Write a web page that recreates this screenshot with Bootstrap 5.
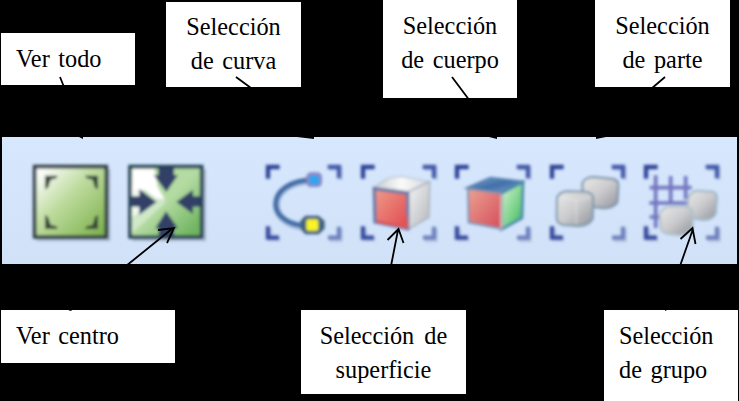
<!DOCTYPE html>
<html lang="es">
<head>
<meta charset="utf-8">
<meta name="viewport" content="width=device-width, initial-scale=1">
<title>Barra de selección</title>
<link href="https://cdn.jsdelivr.net/npm/bootstrap@5.3.0/dist/css/bootstrap.min.css" rel="stylesheet">
<style>
body{background:#000;overflow:hidden}
.board{width:739px;height:401px;font:24.3px/34px "Liberation Serif","Times New Roman",serif;color:#000;word-spacing:2.5px}
.labels-top{height:137px;padding-left:1px}
.labels-bottom{height:137px;padding:46px 0 0 1px}
.note{background:#fff;flex:none;white-space:nowrap}
.n-todo{width:134px;height:52px;margin-top:33px;padding:9px 0 0 15px}
.n-curva{width:135px;height:85px;margin:2px 0 0 31px;padding-top:8px}
.n-cuerpo{width:134px;height:98px;margin-left:82px;padding-top:9px}
.n-parte{width:135px;height:87px;margin-left:78px;padding-top:9px}
.n-centro{width:174px;height:53px;padding:9px 0 0 15px}
.n-super{width:165px;height:84px;margin-left:126px;padding-top:9px}
.n-grupo{width:134px;height:91px;margin-left:138px;padding:9px 0 0 15px}
.wide-gap{word-spacing:4px}
.tools{height:127px;margin:0 2px;padding:13px 0 0 18px;background:linear-gradient(#d7e8fe,#d0e1f8)}
.tool{width:94.5px;height:105px;flex:none;overflow:visible}
.tool-gap{margin-left:46px}
.pointers{left:0;top:0;pointer-events:none}
</style>
<script src="https://cdn.jsdelivr.net/npm/bootstrap@5.3.0/dist/js/bootstrap.bundle.min.js"></script>
</head>
<body>
<main class="board position-relative overflow-hidden">
<section class="labels-top d-flex align-items-start">
<div class="note n-todo">Ver todo</div>
<div class="note n-curva text-center">Selección<br>de curva</div>
<div class="note n-cuerpo text-center">Selección<br>de cuerpo</div>
<div class="note n-parte text-center">Selección<br>de parte</div>
</section>
<nav class="tools d-flex align-items-start" aria-label="Herramientas">
<svg class="tool" viewBox="0 0 283.5 315">
<defs>
<filter id="soft" x="-10%" y="-10%" width="120%" height="120%"><feGaussianBlur stdDeviation="4"/></filter>
<linearGradient id="green" x1="0" y1="0" x2="1" y2="1"><stop offset=".08" stop-color="#fbfdfb"/><stop offset=".45" stop-color="#bddb9d"/><stop offset="1" stop-color="#77ad45"/></linearGradient>
<linearGradient id="green2" x1="0" y1="0" x2="1" y2="1"><stop offset=".5" stop-color="#b4dba2"/><stop offset=".9" stop-color="#70b561"/></linearGradient>
<linearGradient id="red" x1="0" y1="0" x2="1" y2="1"><stop offset="0" stop-color="#ef9c8a"/><stop offset="1" stop-color="#e0494e"/></linearGradient>
<linearGradient id="red2" x1="0" y1="0" x2="1" y2="1"><stop offset="0" stop-color="#eba292"/><stop offset="1" stop-color="#d64c5a"/></linearGradient>
<linearGradient id="side" x1="0" y1="0" x2="1" y2="1"><stop offset="0" stop-color="#f6f6f6"/><stop offset="1" stop-color="#b4b6bb"/></linearGradient>
<linearGradient id="topgray" x1="0" y1="0" x2="1" y2="0"><stop offset="0" stop-color="#c8ccd0"/><stop offset=".5" stop-color="#fafafa"/><stop offset="1" stop-color="#d5d8dc"/></linearGradient>
<linearGradient id="blue" x1="0" y1="0" x2="1" y2="1"><stop offset="0" stop-color="#82a5cf"/><stop offset=".5" stop-color="#406ea8"/><stop offset="1" stop-color="#87a9d1"/></linearGradient>
<linearGradient id="leaf" x1="0" y1="0" x2="1" y2="1"><stop offset="0" stop-color="#dbf5d6"/><stop offset=".65" stop-color="#70ce83"/><stop offset="1" stop-color="#3fa574"/></linearGradient>
<linearGradient id="stone" x1="0" y1="0" x2="1" y2="1"><stop offset="0" stop-color="#eaeaea"/><stop offset=".5" stop-color="#cbcbcd"/><stop offset="1" stop-color="#8f939b"/></linearGradient>
<g id="frame" fill="none" stroke-width="13">
<g stroke="#7f8fae" stroke-opacity=".3" transform="translate(5 6)"><path d="M220 50h32v34M220 264h32v-34M41 232v30h30"/></g>
<path stroke="#2d4296" d="M39 86V51h35"/><path stroke="#4259a9" d="M218 51h34v34"/><path stroke="#35499f" d="M39 229v34h33"/><path stroke="#6d80bd" d="M219 263h33v-33"/>
</g>
</defs>
<g filter="url(#soft)">
<path d="M50 57h221v216H50z" fill="#8492a5" opacity=".55"/>
<path d="M44 50h215v211H44z" fill="url(#green)" stroke="#2f3c44" stroke-width="11"/>
<path d="M75 118V77h38l-4 8-17 4-8 24zM234 118V77h-39l5 8 18 4 7 24zM75 194v43h38l-4-8-17-4-8-24zM234 194v43h-39l5-8 18-4 7-24z" fill="#35433a"/>
</g></svg>
<svg class="tool" viewBox="0 0 283.5 315"><g filter="url(#soft)">
<path d="M52 57h221v216H52z" fill="#8492a5" opacity=".55"/>
<path d="M45 50h215v211H45z" fill="url(#green2)"/>
<path d="M153 156L50 105v145z" fill="#cfe8c8"/>
<path d="M52 57h66l10 54 22 39-28-7-32-22H52z" fill="#fff"/>
<path d="M50 112l45 20-10 45-35 25z" fill="#fff" opacity=".7"/>
<path d="M130 54h47v21h12l-35 51-38-51h14zM49 139h24v-22l52 39-52 38v-24H49zM258 139h-24v-20l-50 37 50 36v-22h24zM131 259v-24h-10l32-51 36 51h-12v24z" fill="#303f68"/>
<path d="M45 50h215v211H45z" fill="none" stroke="#264356" stroke-width="11"/>
</g></svg>
<svg class="tool tool-gap" viewBox="0 0 283.5 315"><g filter="url(#soft)"><use href="#frame"/>
<path d="M173 93C35 94 30 224 151 232" fill="none" stroke="#a5bbdb" stroke-width="20"/>
<path d="M173 90C33 92 26 220 151 227" fill="none" stroke="#416ca6" stroke-width="15"/>
<rect x="154" y="67" width="47" height="44" rx="14" fill="#8e83bd"/><rect x="162" y="75" width="31" height="30" rx="6" fill="#30a3ee"/>
<path d="M151 197h40l18 16v23l-18 17h-40l-15-17v-24z" fill="#3f6280"/><rect x="154" y="208" width="36" height="34" rx="6" fill="#faf420"/>
</g></svg>
<svg class="tool" viewBox="0 0 283.5 315"><g filter="url(#soft)"><use href="#frame"/>
<path d="M70 113l44-28 40-6 84 16-63 31z" fill="url(#topgray)" stroke="#b5c1cd" stroke-width="4"/>
<path d="M174 126l65-31-2 107-62 35z" fill="url(#side)" stroke="#abb6c3" stroke-width="5"/>
<path d="M73 116l100 13v107l-98-20z" fill="url(#red)" stroke="#6678a6" stroke-width="10"/>
<path d="M80 214l90 18v-33" fill="none" stroke="#e25255" stroke-width="7"/>
</g></svg>
<svg class="tool" viewBox="0 0 283.5 315"><g filter="url(#soft)"><use href="#frame"/>
<path d="M69 114l70-31 97 12-65 34z" fill="url(#blue)" stroke="#5782b1" stroke-width="6"/>
<path d="M173 130l64-34-3 108-62 34z" fill="url(#leaf)" stroke="#4988a8" stroke-width="8"/>
<path d="M72 116l100 14v106l-98-19z" fill="url(#red2)" stroke="#7991b1" stroke-width="6"/><path d="M172 134v102" stroke="#e8c2bd" stroke-width="5"/>
</g></svg>
<svg class="tool" viewBox="0 0 283.5 315"><g filter="url(#soft)"><use href="#frame"/>
<path d="M130 100q8-18 34-19l58 6q16 3 16 18l-3 52q-10 16-38 18l-48-6q-18-3-16-14z" fill="url(#stone)" stroke="#7890a6" stroke-width="6"/>
<path d="M54 144q6-17 30-20l58 1q20 4 21 20l-2 62q-12 20-42 21l-44-3q-22-4-22-22z" fill="url(#stone)" stroke="#7d97ac" stroke-width="6"/><path d="M65 143l46 8 47-10M112 151v70" fill="none" stroke="#efefef" stroke-width="5" opacity=".4"/>
</g></svg>
<svg class="tool" viewBox="0 0 283.5 315"><g filter="url(#soft)"><use href="#frame"/>
<path d="M68 76v158M113 78v80M158 78v70M50 113h126M49 159h115M50 201h35" fill="none" stroke="#7376c0" stroke-width="11"/>
<path d="M165 145q8-21 28-23l46 3q13 3 13 18l-4 48q-10 18-36 19l-36-6q-14-4-14-18z" fill="url(#stone)" stroke="#9db6c6" stroke-width="6"/>
<path d="M80 194q6-20 24-23l46-3q26 4 29 18v46q-10 22-38 24l-36-4q-24-6-22-22z" fill="url(#stone)" stroke="#adc1ce" stroke-width="6"/>
</g></svg>
</nav>
<section class="labels-bottom d-flex align-items-start">
<div class="note n-centro">Ver centro</div>
<div class="note n-super text-center"><span class="wide-gap">Selección de</span><br>superficie</div>
<div class="note n-grupo">Selección<br>de grupo</div>
</section>
<svg class="pointers position-absolute" width="739" height="401" viewBox="0 0 739 401" fill="none" stroke="#000" stroke-width="1.8">
<path d="M60 77l4 10M236 77l15 11M452 77l18 24M665 77l-14 12"/>
<path d="M126 266L173 228M158 230l16-2-7 15M391 266l7-36M387.500 240l11-11 5 14M680 266l13-37M680.500 239l12-11 3 16"/>
<path fill="#000" stroke="none" d="M79 137h4v2zM297 137h17v2zM489 137h8v2zM596 139l10-2h-10zM68 310h4l-1 1zM665 310h2l-2 1z"/>
</svg>
</main>
</body>
</html>
